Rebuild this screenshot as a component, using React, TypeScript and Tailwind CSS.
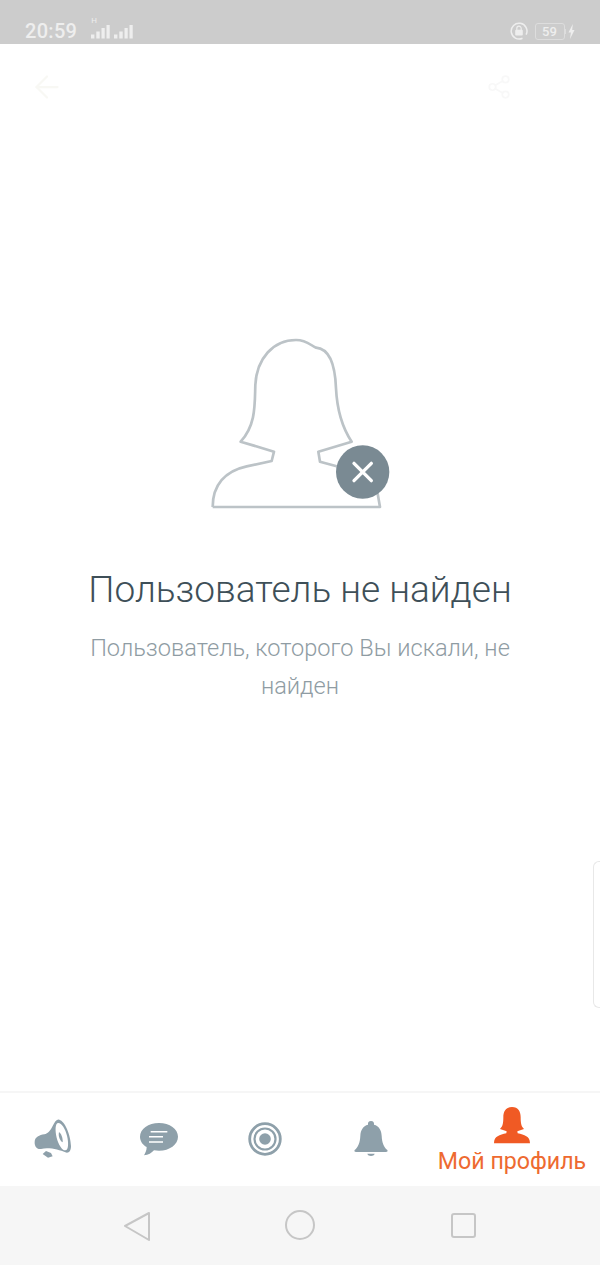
import { ArrowLeft, Share2 } from 'lucide-react'

function SignalBars() {
  return (
    <svg width="21" height="15" viewBox="0 0 21 15" fill="#eeeeee">
      <rect x="1" y="10.5" width="3.4" height="4" />
      <rect x="6.3" y="7.5" width="3.4" height="7" />
      <rect x="11.5" y="4" width="3.2" height="10.5" />
      <rect x="16.5" y="1" width="3.2" height="13.5" />
    </svg>
  )
}

function StatusBar() {
  return (
    <div className="flex h-[44px] items-center justify-between bg-[#cccccc] pl-[25px] pr-[25px] pt-[18px] text-[#eeeeee]">
      <div className="flex items-center">
        <span className="text-[20px] font-medium leading-[26px] tracking-[0.3px]">20:59</span>
        <div className="relative ml-[13px] flex items-center gap-[2px] pt-[1px]">
          <span className="absolute left-[1px] top-[-7px] text-[8px] leading-[10px]">H</span>
          <SignalBars />
          <SignalBars />
        </div>
      </div>
      <div className="flex items-center gap-[7px]">
        <svg width="18" height="18" viewBox="0 0 18 18" fill="none" stroke="#eeeeee" strokeWidth="1.5">
          <path d="M12.5 16.2a7.9 7.9 0 1 1 3.6-3.5" />
          <rect x="5.2" y="7.8" width="7.6" height="5.6" rx="1" fill="#eeeeee" stroke="none" />
          <path d="M6.8 8V6.4a2.2 2.2 0 0 1 4.4 0V8" strokeWidth="1.2" />
        </svg>
        <div className="flex items-center">
          <div className="flex h-[17px] w-[30px] items-center justify-center rounded-[3px] border border-[#dddddd] text-[13px] font-medium leading-none">
            59
          </div>
          <div className="h-[5px] w-[1.5px] bg-[#dddddd]" />
          <svg className="ml-[2px]" width="7" height="15" viewBox="0 0 7 15" fill="#eeeeee">
            <path d="M4.8 0 0.5 8.5h2.4L2 15l4.5-9H4.2z" />
          </svg>
        </div>
      </div>
    </div>
  )
}

function PersonOutline() {
  return (
    <svg width="220" height="195" viewBox="0 0 660 585" fill="none">
      <path
        d="M68 546H570L562 500M440 424 390 410 385 380 485 350C455 305 441 250 438 190 436 135 425 72 378 68 362 62 352 45 318 45 250 45 200 100 196 180 194 240 198 300 152 350L252 380 245 408 170 424C105 438 68 480 68 546"
        stroke="#bcc3c7"
        strokeWidth="8"
        strokeLinejoin="round"
      />
      <circle cx="518" cy="441" r="80" fill="#7a8a93" />
      <path d="M492 415 544 467M544 415 492 467" stroke="#ffffff" strokeWidth="10" strokeLinecap="round" />
    </svg>
  )
}

function Megaphone() {
  return (
    <svg width="38" height="39" viewBox="104 104 114 117" fill="#8ea0aa">
      <path d="M160 125C166 113 172 104 180 106 196 110 214 150 215 185 215 200 208 208 198 204 180 197 150 188 125 194 112 196 105 185 106 172 107 158 120 152 135 150 146 148 154 138 160 125Z" />
      <path d="M177 116C167 116 167 140 172 160 177 180 188 198 198 198 208 198 208 174 203 154 198 134 187 116 177 116Z" fill="#ffffff" />
      <path d="M179 143C185 147 191 160 190 174 182 170 176 156 179 143Z" />
      <path d="M140 200 155 206 160 216 146 220 130 209Z" />
    </svg>
  )
}

function ChatBubble() {
  return (
    <svg width="40" height="36" viewBox="0 0 120 108">
      <path
        d="M60 6C28 6 3 24 3 47 3 60 11 71 23 78 23 88 19 96 15 103 28 102 38 96 45 88 50 89 55 89 60 89 92 89 117 70 117 47 117 24 92 6 60 6Z"
        fill="#8ea0aa"
      />
      <path d="M35 32H85M30 47H72M30 63H72" stroke="#ffffff" strokeWidth="4.5" />
    </svg>
  )
}

function Target() {
  return (
    <svg width="34" height="34" viewBox="0 0 34 34" fill="none" stroke="#8ea0aa">
      <circle cx="17" cy="17" r="15.3" strokeWidth="2.8" />
      <circle cx="17" cy="17" r="10.5" strokeWidth="2.2" />
      <circle cx="17" cy="17" r="5.8" fill="#8ea0aa" stroke="none" />
    </svg>
  )
}

function Bell() {
  return (
    <svg width="36" height="40" viewBox="0 0 108 120" fill="#8ea0aa">
      <path d="M54 6C47 6 44 11 45 17 30 21 23 33 22 50 21 70 16 84 5 93 3 97 5 99 9 99H99C103 99 105 97 103 93 92 84 87 70 86 50 85 33 78 21 63 17 64 11 61 6 54 6Z" />
      <path d="M43 104H65C63 113 45 113 43 104Z" />
    </svg>
  )
}

function ProfileFilled() {
  return (
    <svg width="38" height="38" viewBox="0 0 114 114" fill="#f05a24">
      <path d="M57 3C38 3 31 17 31 33 31 50 30 60 21 69L41 76 40 82C20 87 3 90 3 112H111C111 90 94 87 74 82L73 76 93 69C84 60 83 50 83 33 83 17 76 3 57 3Z" />
    </svg>
  )
}

function BottomTabs() {
  return (
    <div className="flex h-[95px] border-t-2 border-[#f6f6f6] bg-white">
      <div className="flex w-[106px] items-center justify-center pb-[2px]">
        <Megaphone />
      </div>
      <div className="flex w-[106px] items-center justify-center pb-[2px]">
        <ChatBubble />
      </div>
      <div className="flex w-[106px] items-center justify-center pb-[2px]">
        <Target />
      </div>
      <div className="flex w-[106px] items-center justify-center pb-[2px]">
        <Bell />
      </div>
      <div className="flex flex-1 flex-col items-center pt-[13px]">
        <ProfileFilled />
        <span className="mt-[3px] whitespace-nowrap text-[23.2px] leading-[28px] text-[#ee6a30]">Мой профиль</span>
      </div>
    </div>
  )
}

function SystemNav() {
  return (
    <div className="flex h-[79px] items-start bg-[#f6f6f6] pl-[122px] pt-[24px]">
      <svg width="30" height="32" viewBox="0 0 30 32" fill="none" stroke="#c6c6c6" strokeWidth="2" strokeLinejoin="round">
        <path d="M27 3 3 16 27 30Z" />
      </svg>
      <div className="ml-[133px] h-[30px] w-[30px] rounded-full border-2 border-[#c6c6c6]" />
      <div className="ml-[136px] mt-[3px] h-[25px] w-[25px] rounded-[3px] border-2 border-[#c6c6c6]" />
    </div>
  )
}

export default function App() {
  return (
    <div className="relative flex h-[1265px] w-[600px] flex-col overflow-hidden bg-white font-['Roboto',sans-serif]">
      <StatusBar />

      <div className="flex h-[86px] items-center justify-between pl-[29px] pr-[88px]">
        <ArrowLeft size={36} strokeWidth={1.5} className="text-[#f8f8f4]" />
        <Share2 size={26} strokeWidth={1.6} className="text-[#f8f8f8]" />
      </div>

      {/* Not found message */}
      <div className="flex flex-1 flex-col items-center pt-[195px]">
        <PersonOutline />
        <h1 className="mt-[45px] whitespace-nowrap text-[37px] font-light leading-[50px] text-[#3e4f58]">Пользователь не найден</h1>
        <p className="mt-[14px] w-[440px] text-center text-[23.6px] font-light leading-[38px] text-[#8f9ca3]">
          Пользователь, которого Вы искали, не найден
        </p>
      </div>

      <BottomTabs />
      <SystemNav />

      {/* edge handle */}
      <div className="absolute right-0 top-[861px] h-[147px] w-[7px] rounded-l-[6px] border border-r-0 border-[#e8e8e8] bg-white" />
    </div>
  )
}
